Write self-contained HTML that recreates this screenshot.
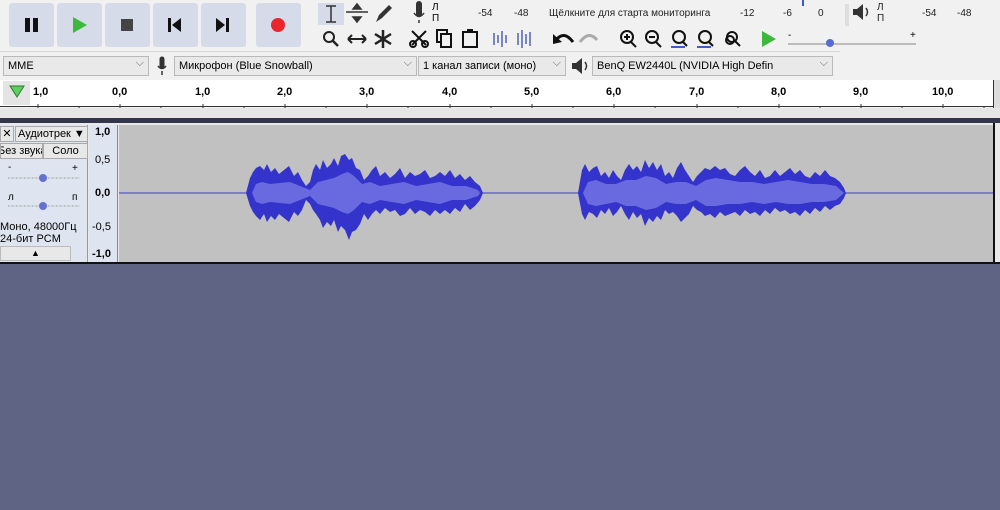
<!DOCTYPE html><html><head><meta charset="utf-8"><style>
*{box-sizing:border-box;margin:0;padding:0}
body{width:1000px;height:510px;overflow:hidden;background:#5f6484;font-family:"Liberation Sans","Noto Sans CJK JP",sans-serif;font-size:11px;color:#000;position:relative}
.a{position:absolute}
.btn{position:absolute;top:3px;width:45px;height:44px;background:#d5dbe9;border-radius:3px}
.sel{position:absolute;top:56px;height:20px;background:#e9e9e9;border:1px solid #b9b9b9;font-size:11px;line-height:18px;padding-left:4px;white-space:nowrap;overflow:hidden}
.sel:after{content:"⌵";position:absolute;right:4px;top:-3px;color:#666;font-size:11px}
.tk{position:absolute;font-size:11px;font-weight:bold}
</style></head><body>
<div class="a" style="left:0;top:0;width:1000px;height:108px;background:#f1f1f1"></div>
<div class="a" style="left:0;top:51px;width:840px;height:1px;background:#d8d8d8"></div>
<div class="btn" style="left:9px"></div><div class="btn" style="left:57px"></div><div class="btn" style="left:105px"></div><div class="btn" style="left:153px"></div><div class="btn" style="left:201px"></div><div class="btn" style="left:256px"></div>
<svg class="a" style="left:0;top:0" width="1000" height="52">
<rect x="25" y="18" width="5" height="14" fill="#111"/><rect x="33" y="18" width="5" height="14" fill="#111"/>
<polygon points="73,17 87,25 73,33" fill="#3cb83c"/>
<rect x="121" y="19" width="12" height="12" fill="#444"/>
<rect x="168" y="18" width="3" height="14" fill="#111"/><polygon points="181,18 172,25 181,32" fill="#111"/>
<polygon points="216,18 225,25 216,32" fill="#111"/><rect x="226" y="18" width="3" height="14" fill="#111"/>
<circle cx="278" cy="25" r="7" fill="#e8262b"/>
<rect x="318" y="3" width="26" height="22" fill="#d5dbe9"/>
<path d="M326 6h10M331 6v16M326 22h10" stroke="#333" stroke-width="1.5" fill="none"/>
<path d="M346 12h22M357 4l-4 5h8zM357 22l-4-5h8z" stroke="#333" stroke-width="1.5" fill="#333"/>
<path d="M376 22l3-7 10-10 3 3-10 10z" fill="#333"/>
<circle cx="329" cy="37" r="5" stroke="#222" stroke-width="2" fill="none"/><path d="M333 41l5 5" stroke="#222" stroke-width="2.5"/>
<path d="M348 39h18M348 39l4-4M348 39l4 4M366 39l-4-4M366 39l-4 4" stroke="#222" stroke-width="2" fill="none"/>
<path d="M383 30v18M375 34l16 10M375 44l16-10" stroke="#222" stroke-width="2.5"/>
<path d="M419 4v10" stroke="#333" stroke-width="6" stroke-linecap="round"/><path d="M414 13q5 7 10 0M419 20v3" stroke="#333" stroke-width="1.5" fill="none"/>
<text x="432" y="10" font-size="10">Л</text><text x="432" y="21" font-size="10">П</text>
<g font-size="10" fill="#222"><text x="478" y="16">-54</text><text x="514" y="16">-48</text><text x="549" y="16">Щёлкните для старта мониторинга</text><text x="740" y="16">-12</text><text x="783" y="16">-6</text><text x="818" y="16">0</text>
<text x="877" y="10">Л</text><text x="877" y="21">П</text><text x="922" y="16">-54</text><text x="957" y="16">-48</text></g>
<path d="M803 0v6" stroke="#3b5ccc" stroke-width="2"/>
<path d="M846 4v22M848 4v22" stroke="#ccc"/>
<path d="M853 9h4l6-5v16l-6-5h-4z" fill="#333"/><path d="M866 8q3 4 0 8" stroke="#333" stroke-width="1.5" fill="none"/>
<path d="M412 31l14 14M426 31l-14 14" stroke="#111" stroke-width="2"/><circle cx="413" cy="44" r="3" stroke="#111" stroke-width="2" fill="none"/><circle cx="425" cy="44" r="3" stroke="#111" stroke-width="2" fill="none"/>
<rect x="437" y="30" width="10" height="12" fill="none" stroke="#111" stroke-width="2"/><rect x="441" y="34" width="10" height="13" fill="#f1f1f1" stroke="#111" stroke-width="2"/>
<rect x="463" y="32" width="14" height="15" fill="none" stroke="#111" stroke-width="2"/><rect x="467" y="29" width="6" height="4" fill="#111"/>
<path d="M494 33v12M498 35v8M502 31v16M506 35v8M518 33v12M522 30v18M526 34v10M530 32v14" stroke="#7a86c0" stroke-width="2"/>
<path d="M556 40q8-10 17 2" stroke="#111" stroke-width="3" fill="none"/><polygon points="553,34 553,44 562,42" fill="#111"/>
<path d="M597 40q-8-10-17 2" stroke="#aaa" stroke-width="3" fill="none"/>
<g stroke="#111" stroke-width="2" fill="none"><circle cx="627" cy="37" r="6"/><path d="M631 42l5 5M624 37h6M627 34v6"/>
<circle cx="652" cy="37" r="6"/><path d="M656 42l5 5M649 37h6"/>
<circle cx="679" cy="37" r="6"/><path d="M683 42l4 4"/><circle cx="705" cy="37" r="6"/><path d="M709 42l4 4"/>
<circle cx="732" cy="37" r="5"/><path d="M735 41l5 5"/><circle cx="730" cy="40" r="4"/></g>
<path d="M671 47h14M697 47h14" stroke="#3b5ccc" stroke-width="2"/>
<polygon points="762,31 776,39 762,47" fill="#3cb83c"/>
<path d="M788 44h128" stroke="#888"/><text x="788" y="38" font-size="10">-</text><text x="910" y="38" font-size="10">+</text><circle cx="830" cy="43" r="4" fill="#5a6ad0"/>
</svg>
<div class="sel" style="left:3px;width:146px">MME</div>
<svg class="a" style="left:154px;top:56px" width="16" height="20"><path d="M8 3v7" stroke="#333" stroke-width="5" stroke-linecap="round"/><path d="M4 10q4 5 8 0M8 15v4" stroke="#333" stroke-width="1.5" fill="none"/></svg>
<div class="sel" style="left:174px;width:243px">Микрофон (Blue Snowball)</div>
<div class="sel" style="left:418px;width:148px">1 канал записи (моно)</div>
<svg class="a" style="left:570px;top:57px" width="20" height="18"><path d="M2 6h4l6-5v16l-6-5h-4z" fill="#333"/><path d="M15 5q3 4 0 8" stroke="#333" stroke-width="1.5" fill="none"/></svg>
<div class="sel" style="left:592px;width:241px">BenQ EW2440L (NVIDIA High Defin</div>
<div class="a" style="left:0;top:80px;width:994px;height:27px;background:#fff;border-bottom:1px solid #333"></div>
<div class="a" style="left:3px;top:81px;width:27px;height:24px;background:#e4e4e4"></div>
<svg class="a" style="left:9px;top:85px" width="16" height="14"><polygon points="1,1 15,1 8,12" fill="#5ccf5c" stroke="#2a7a2a"/></svg>
<div class="tk" style="left:33px;top:86px">1,0</div><div class="tk" style="left:112px;top:86px">0,0</div><div class="tk" style="left:195px;top:86px">1,0</div><div class="tk" style="left:277px;top:86px">2,0</div><div class="tk" style="left:359px;top:86px">3,0</div><div class="tk" style="left:442px;top:86px">4,0</div><div class="tk" style="left:524px;top:86px">5,0</div><div class="tk" style="left:606px;top:86px">6,0</div><div class="tk" style="left:689px;top:86px">7,0</div><div class="tk" style="left:771px;top:86px">8,0</div><div class="tk" style="left:853px;top:86px">9,0</div><div class="tk" style="left:932px;top:86px">10,0</div>
<svg class="a" style="left:0;top:100px" width="1000" height="8"><g stroke="#333"><path d="M38 4v4M120 4v4M203 4v4M285 4v4M367 4v4M450 4v4M532 4v4M614 4v4M697 4v4M779 4v4M861 4v4M943 4v4"/><path d="M79 6v2M161 6v2M244 6v2M326 6v2M408 6v2M491 6v2M573 6v2M655 6v2M738 6v2M820 6v2M902 6v2M984 6v2"/></g></svg>
<div class="a" style="left:993px;top:80px;width:7px;height:28px;background:#ddd;border-left:1px solid #333"></div>
<div class="a" style="left:0;top:108px;width:1000px;height:12px;background:#e6e6e6"></div>
<div class="a" style="left:0;top:118px;width:1000px;height:5px;background:#33364a"></div>
<div class="a" style="left:0;top:123px;width:1000px;height:141px;background:#e9e9e9;border-bottom:2px solid #111"></div>
<div class="a" style="left:0;top:125px;width:88px;height:137px;background:#dfe5f0;border-right:1px solid #999"></div>
<div class="a" style="left:0;top:126px;width:14px;height:16px;background:#e8e8e8;border:1px solid #aaa;text-align:center;line-height:14px">✕</div>
<div class="a" style="left:15px;top:126px;width:73px;height:16px;background:#e8e8e8;border:1px solid #aaa;line-height:14px;padding-left:2px">Аудиотрек ▼</div>
<div class="a" style="left:0;top:143px;width:43px;height:16px;background:#e8e8e8;border:1px solid #aaa;line-height:14px;white-space:nowrap;overflow:hidden;text-indent:-3px">Без звука</div>
<div class="a" style="left:43px;top:143px;width:45px;height:16px;background:#e8e8e8;border:1px solid #aaa;line-height:14px;text-align:center">Соло</div>
<svg class="a" style="left:0;top:160px" width="88" height="60"><text x="8" y="10" font-size="10">-</text><text x="72" y="11" font-size="10">+</text><path d="M8 18h72M8 46h72" stroke="#888" stroke-dasharray="1 3"/><path d="M8 18h72M8 46h72" stroke="#aaa" stroke-width=".5"/><circle cx="43" cy="18" r="4" fill="#6670d0"/><circle cx="43" cy="46" r="4" fill="#6670d0"/><text x="8" y="40" font-size="10">л</text><text x="72" y="40" font-size="10">п</text></svg>
<div class="a" style="left:0;top:221px;font-size:11px;line-height:12px">Моно, 48000Гц<br>24-бит PCM</div>
<div class="a" style="left:0;top:246px;width:71px;height:15px;background:#e8e8e8;border:1px solid #bbb;text-align:center;font-size:9px;line-height:13px">▲</div>
<div class="a" style="left:89px;top:125px;width:29px;height:137px;background:#dfe5f0;border-right:1px solid #888"></div>
<div class="tk" style="left:95px;top:126px">1,0</div><div class="a" style="left:95px;top:154px">0,5</div><div class="tk" style="left:95px;top:187px">0,0</div><div class="a" style="left:92px;top:221px">-0,5</div><div class="tk" style="left:92px;top:248px">-1,0</div>
<div class="a" style="left:119px;top:125px;width:874px;height:137px;background:#c1c1c1"></div>
<svg class="a" style="left:0;top:0" width="1000" height="270">
<path d="M119 193H993" stroke="#3a3ac8" stroke-width="1"/>
<path fill="#3434cc" d="M246 193L250 178 253 172 256 168 260 166 264 170 267 164 271 172 275 168 279 174 284 170 289 166 294 176 298 172 302 180 306 186 310 182 313 170 316 164 320 170 323 160 327 168 331 164 334 158 338 166 341 156 345 154 349 160 352 158 356 168 360 170 364 180 368 176 372 170 376 166 380 176 385 172 390 178 395 174 400 168 405 178 410 172 415 176 420 174 425 170 430 178 435 176 440 172 445 176 450 170 455 178 460 174 465 180 470 176 475 182 480 186 483 193 480 200 475 206 470 210 465 204 460 212 455 208 450 214 445 210 440 214 435 210 430 216 425 212 420 210 415 214 410 208 405 214 400 216 395 210 390 212 385 208 380 214 376 210 372 214 368 220 364 214 360 224 356 230 352 232 349 240 345 230 341 226 338 232 334 220 331 226 327 222 323 228 320 220 316 214 313 210 310 204 306 200 302 210 298 216 294 212 289 222 284 218 279 214 275 220 271 216 267 222 264 214 260 220 256 216 253 212 250 206Z"/>
<path fill="#3434cc" d="M578 193L582 170 585 164 589 172 593 168 597 166 601 176 605 172 609 178 613 170 617 176 621 180 625 170 629 164 633 170 637 166 641 172 645 160 649 168 653 162 657 170 661 164 665 176 669 172 673 178 677 168 681 162 685 170 689 176 693 182 697 176 701 172 705 168 710 170 715 166 720 170 725 168 730 174 735 176 740 170 745 166 750 172 755 176 760 170 765 178 770 176 775 170 780 176 785 172 790 168 795 174 800 170 805 176 810 178 815 172 820 176 825 170 830 176 835 178 840 182 844 188 846 193 844 198 840 204 835 206 830 210 825 206 820 212 815 208 810 214 805 210 800 216 795 212 790 214 785 210 780 212 775 208 770 214 765 210 760 216 755 212 750 214 745 210 740 216 735 212 730 214 725 216 720 212 715 218 710 214 705 216 701 212 697 210 693 206 689 214 685 218 681 222 677 216 673 212 669 214 665 210 661 220 657 216 653 222 649 218 645 226 641 214 637 218 633 212 629 220 625 214 621 206 617 212 613 216 609 208 605 214 601 210 597 218 593 214 589 212 585 220 582 214Z"/>
<path fill="#6a6ae0" d="M252 193L256 184 262 182 270 184 280 183 290 182 300 186 310 190 318 182 326 180 334 178 342 174 348 172 354 176 362 184 370 182 380 186 392 184 404 182 416 186 428 184 440 182 452 186 466 186 478 190 480 193 478 196 466 200 452 200 440 204 428 202 416 200 404 204 392 202 380 200 370 204 362 202 354 210 348 214 342 212 334 208 326 206 318 204 310 196 300 200 290 204 280 203 270 202 262 204 256 202Z"/>
<path fill="#6a6ae0" d="M583 193L588 182 596 180 606 184 616 184 626 180 636 180 646 176 656 178 666 184 676 182 686 182 696 186 706 180 716 178 728 180 740 182 752 182 764 184 776 182 788 180 800 182 812 184 824 184 836 186 844 193 836 200 824 202 812 202 800 204 788 204 776 202 764 204 752 202 740 204 728 204 716 206 706 206 696 200 686 204 676 204 666 202 656 208 646 210 636 206 626 206 616 202 606 204 596 206 588 204Z"/>
</svg>
<div class="a" style="left:993px;top:123px;width:2px;height:141px;background:#111"></div>
</body></html>
